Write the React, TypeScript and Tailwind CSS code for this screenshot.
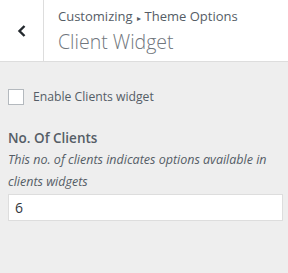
export default function App() {
  return (
    <div className="h-[273px] w-[288px] bg-[#eeeeee] font-['Open_Sans',sans-serif] text-[#555d66]">
      <div className="flex h-[62px] border-b border-[#dddddd] bg-white">
        <button className="flex w-[44px] items-center justify-center border-r border-[#dddddd] text-[#23282d]">
          <svg width="10" height="14" viewBox="0 0 10 14" fill="none">
            <path d="M7.5 2 L2.5 7 L7.5 12" stroke="currentColor" strokeWidth="2.4" />
          </svg>
        </button>
        <div className="flex flex-col pl-[14px] pt-[6px]">
          <div className="text-[13px] leading-[20px]">
            Customizing<span className="mx-[4px] align-middle text-[8px]">▸</span>Theme Options
          </div>
          <div className="text-[19.5px] font-light leading-[28px] text-[#70767d]">Client Widget</div>
        </div>
      </div>
      <div className="flex flex-col px-2 pt-[26px]">
        <label className="flex items-center gap-[9px]">
          <span className="h-4 w-4 border border-[#b4b9be] bg-white" />
          <span className="text-[12.2px] leading-[18px]">Enable Clients widget</span>
        </label>
        <div className="mt-[22px] text-[13.5px] font-semibold leading-[20px]">No. Of Clients</div>
        <div className="mt-[1px] text-[12.5px] italic leading-[22px]">
          This no. of clients indicates options available in clients widgets
        </div>
        <div className="mt-[1px] flex h-[27px] w-[275px] items-center border border-[#dddddd] bg-white px-[6px] text-[14px] text-[#32373c]">
          6
        </div>
      </div>
    </div>
  )
}
